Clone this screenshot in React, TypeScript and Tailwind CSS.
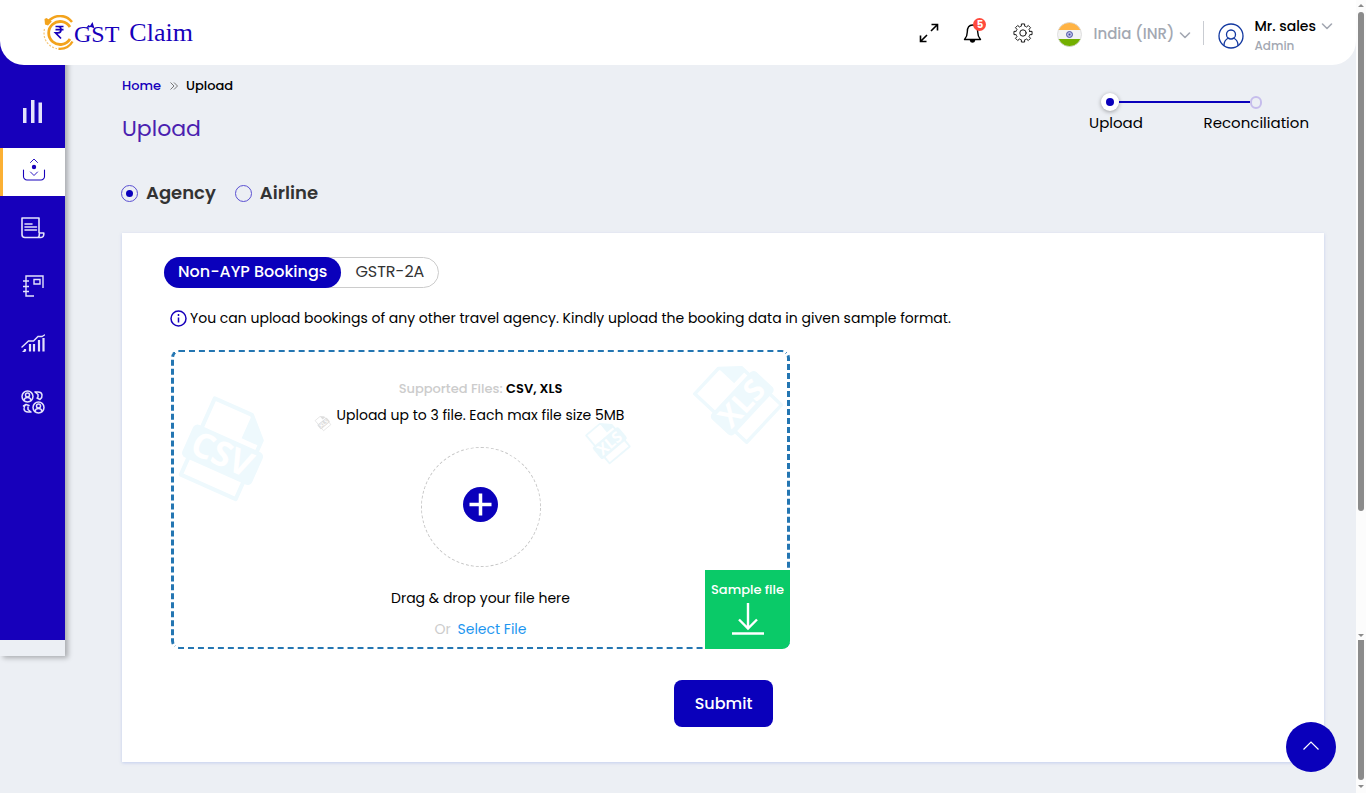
import type { ReactNode } from "react";

const STROKE = {
  fill: "none",
  stroke: "currentColor",
  strokeLinecap: "round" as const,
  strokeLinejoin: "round" as const,
};

function LogoMark() {
  return (
    <svg width="31" height="36" viewBox="0 0 31 36" fill="none" aria-hidden="true">
      <path d="M5 6.5C12-1 23-1 29 7" stroke="#f3a31c" strokeWidth="2.4" />
      <path d="M1.500 4 3.500 3 8.800 6.500 5 10.500 2 9.500z" fill="#f3a31c" />
      <path d="M27 12A11.5 11.5 0 1 0 27 24" stroke="#f3a31c" strokeWidth="2.8" />
      <path d="M15.5 33.8C21 34.2 26.500 31.800 29.500 26.500" stroke="#f3a31c" strokeWidth="2.4" />
      <path d="M1.500 14C-.5 23 4 31.500 14 33.600" stroke="#f6c677" strokeWidth="1.200" strokeDasharray="2 1.500" />
      <path
        d="M12.500 11.500h8M12.500 14.700h8M12.500 11.500h2.500c4 0 4 6.300 0 6.300h-2.500l5.500 5.700"
        stroke="#1700bb"
        strokeWidth="1.700"
      />
    </svg>
  );
}

function ExpandIcon() {
  return (
    <svg width="20" height="20" viewBox="0 0 20 20" {...STROKE} strokeWidth="1.6" strokeLinecap="butt" strokeLinejoin="miter">
      <path d="M12 8 18.500 1.500M12.500 1.500h6v6M8 12l-6.500 6.500M1.500 12.500v6h6" />
    </svg>
  );
}

function BellIcon() {
  return (
    <svg width="20" height="22" viewBox="0 0 20 22" {...STROKE} strokeWidth="1.4">
      <path d="M1.500 17.500h16c-2-2.200-2.800-3.500-2.800-7.500 0-4.500-2-7-5.200-7S4.300 5.500 4.300 10c0 4-.8 5.300-2.800 7.500z" />
      <path d="M7.500 18.500c.5 2 3.500 2 4 0z" fill="currentColor" />
    </svg>
  );
}

function GearIcon() {
  const teeth = Array.from({ length: 8 }, (_, i) => {
    const p = (deg: number, r: number) => {
      const a = ((deg + i * 45) * Math.PI) / 180;
      return `${(10 + r * Math.cos(a)).toFixed(2)} ${(10 + r * Math.sin(a)).toFixed(2)}`;
    };
    return `${i === 0 ? "M" : "L"}${p(-14, 7)} L${p(-10, 9.2)} L${p(10, 9.2)} L${p(14, 7)} A7 7 0 0 1 ${p(31, 7)}`;
  }).join(" ");
  return (
    <svg width="20" height="20" viewBox="0 0 20 20" {...STROKE} strokeWidth=".9">
      <path d={`${teeth} Z`} />
      <circle cx="10" cy="10" r="3.2" />
    </svg>
  );
}

function IndiaFlag() {
  return (
    <svg width="25" height="25" viewBox="0 0 25 25" aria-hidden="true">
      <clipPath id="flag-round">
        <circle cx="12.5" cy="12.5" r="12" />
      </clipPath>
      <g clipPath="url(#flag-round)">
        <path fill="#f3f3f3" d="M0 0h25v25H0z" />
        <path fill="#ffb344" d="M0 0h25v8H0z" />
        <path fill="#73af00" d="M0 17h25v8H0z" />
      </g>
      <circle cx="12.5" cy="12.5" r="12" fill="none" stroke="#d9d9d9" strokeWidth=".8" />
      <circle cx="12.5" cy="12.500" r="3" fill="#b9bce6" stroke="#41479b" strokeWidth=".9" />
      <circle cx="12.5" cy="12.500" r="1" fill="#41479b" />
    </svg>
  );
}

function ChevronDown() {
  return (
    <svg width="12" height="8" viewBox="0 0 12 8" {...STROKE} strokeWidth="1.6" aria-hidden="true">
      <path d="M1.500 2 6 6.500 10.500 2" />
    </svg>
  );
}

function AvatarIcon() {
  return (
    <svg width="26" height="26" viewBox="0 0 26 26" {...STROKE} strokeWidth="1.3" aria-hidden="true">
      <circle cx="13" cy="13" r="12" />
      <circle cx="13" cy="11.500" r="4.500" />
      <path d="M6 22.500c0-4 2-6.500 4.800-7.500M20 22.500c0-4-2-6.500-4.800-7.500" />
    </svg>
  );
}

function BarsIcon() {
  return (
    <svg width="24" height="24" viewBox="0 0 24 24" fill="currentColor">
      <path d="M2 8h3.500v15H2zM10 0h3.500v23H10zM17.500 2.500H21V23h-3.500z" />
    </svg>
  );
}

function UploadTrayIcon() {
  return (
    <svg width="24" height="24" viewBox="0 0 24 24" {...STROKE} strokeWidth="1.1">
      <path d="M1.500 12v6.500a3.500 3.500 0 0 0 3.500 3.500h14a3.500 3.500 0 0 0 3.500-3.500V12" />
      <path d="M8.500 4.500 12 1l3.500 3.500M8.500 14l3.500 3.500 3.500-3.500" strokeWidth=".9" />
      <circle cx="12" cy="9" r="2.200" fill="currentColor" stroke="none" />
    </svg>
  );
}

function ScrollDocIcon() {
  return (
    <svg width="24" height="22" viewBox="0 0 24 22" {...STROKE} strokeWidth="1.6">
      <path d="M18 15.500V1H1v16.500A3 3 0 0 0 4 20.500h16c2 0 3-1.500 2.800-4.500h-4.500c.2 3-.3 4.500-2 4.500" />
      <path d="M4 7h7M4 10h11.500M4 13h11.500" />
    </svg>
  );
}

function LedgerIcon() {
  return (
    <svg width="24" height="22" viewBox="0 0 24 22" {...STROKE} strokeWidth="1.4" strokeLinecap="butt" strokeLinejoin="miter">
      <path d="M13 21H5V1h17v12M2 6h6M2 11.500h6M2 16.500h6M13 4.500h6v4.500h-6z" />
    </svg>
  );
}

function GrowthIcon() {
  return (
    <svg width="24" height="20" viewBox="0 0 24 20" {...STROKE} strokeWidth="1.4" strokeLinejoin="miter">
      <path d="M1 13 7.500 7h5l4.500-4.500h4l2.500-1.500" />
      <path d="M4 15v2.500M9 10v7.500M13 10v7.500M18 6v11.500M22.500 4v13.500" strokeWidth="2.200" strokeLinecap="butt" />
      <path d="m1 18 3-3v3z" fill="currentColor" stroke="none" />
    </svg>
  );
}

function UsersSwapIcon() {
  return (
    <svg width="24" height="24" viewBox="0 0 24 24" {...STROKE} strokeWidth="1.5">
      <circle cx="6.500" cy="6.500" r="5.500" />
      <circle cx="6.500" cy="5" r="2" />
      <path d="M3 10.500c.5-4 6.500-4 7 0" />
      <circle cx="17.500" cy="17.500" r="5.500" />
      <circle cx="17.500" cy="16" r="2" />
      <path d="M14 21.500c.5-4 6.500-4 7 0" />
      <path d="M14 2h3c5 0 5 5 2 7.500M14 2l3 2.500V7M19 9.500l-3-1.500M10 22H7c-5 0-5-5-2-7.500M10 22l-3-2.500V17M2.500 16 5 14.500l3 1" />
    </svg>
  );
}

function FileMark({ label, size, turn, color }: { label: string; size: number; turn: number; color: string }) {
  return (
    <svg width={size} height={size} viewBox="-56 -56 112 112" fill="none" aria-hidden="true">
      <g transform={`rotate(${turn})`}>
        <path d="M-28-43h40L31-24v63h-59z" stroke={color} strokeWidth="4" strokeLinejoin="round" />
        <path d="M12-43 31-24v6H12z" fill={color} />
        <rect x="-36" y="-13" width="75" height="35" rx="5" fill={color} />
        <text
          x="1"
          y="16"
          textAnchor="middle"
          fill="#ffffff"
          fontFamily="Open Sans, sans-serif"
          fontWeight="700"
          fontSize="34"
        >
          {label}
        </text>
      </g>
    </svg>
  );
}

const NAV: { label: string; icon: ReactNode; active?: boolean }[] = [
  { label: "Dashboard", icon: <BarsIcon /> },
  { label: "Upload", icon: <UploadTrayIcon />, active: true },
  { label: "Invoices", icon: <ScrollDocIcon /> },
  { label: "Ledger", icon: <LedgerIcon /> },
  { label: "Reports", icon: <GrowthIcon /> },
  { label: "Users", icon: <UsersSwapIcon /> },
];

function Header() {
  return (
    <header className="relative z-10 flex h-[65px] items-center justify-between rounded-b-[24px] bg-white pr-[23px] pl-[43px]">
      <a href="#home" className="flex items-center font-['Liberation_Serif',serif] text-[#1700bb]">
        <LogoMark />
        <span className="relative pt-[2px] text-2xl">
          GST
          <svg className="absolute top-[6px] left-3" width="9" height="7" viewBox="0 0 9 7" fill="currentColor" aria-hidden="true">
            <path d="M0 6 2.500 3 4 4 6.500 0l2 6.500-3.500-1.500z" />
          </svg>
        </span>
        <span className="ml-[10px] text-[26px]">Claim</span>
      </a>
      <div className="flex items-center text-black">
        <button type="button" aria-label="Full screen" className="mr-6">
          <ExpandIcon />
        </button>
        <button type="button" aria-label="Notifications" className="relative mr-[30px]">
          <BellIcon />
          <span className="absolute -top-1 left-[10px] flex size-[13px] items-center justify-center rounded-full bg-[#ff4a3d] text-[10px] font-bold text-white">
            5
          </span>
        </button>
        <button type="button" aria-label="Settings" className="mr-6">
          <GearIcon />
        </button>
        <label className="mr-3 flex items-center pt-1 text-[#a3a8b2]">
          <IndiaFlag />
          <select aria-label="Country" className="ml-[11px] appearance-none bg-transparent text-[15px] font-medium outline-none">
            <option>India (INR)</option>
          </select>
          <span className="ml-[5px]">
            <ChevronDown />
          </span>
        </label>
        <span className="mr-[14px] h-6 w-px bg-[#c9ccd2]" />
        <button type="button" className="flex items-center gap-[10px] pt-[6px] text-left">
          <span className="text-[#1238a0]">
            <AvatarIcon />
          </span>
          <span>
            <span className="flex items-center gap-[5px] text-sm leading-5 font-medium">
              Mr. sales
              <span className="text-[#a3a8b2]">
                <ChevronDown />
              </span>
            </span>
            <span className="block text-xs leading-5 font-medium text-[#a3a8b2]">Admin</span>
          </span>
        </button>
      </div>
    </header>
  );
}

function Sidebar() {
  return (
    <aside className="-mt-[30px] w-[65px] shrink-0 self-start pb-4 shadow-[3px_2px_5px_rgba(0,0,0,0.28)]">
      <nav className="flex h-[605px] flex-col gap-[10px] bg-[#1700bb] pt-[55px] text-[#e4e2fb]">
        {NAV.map((item) => (
          <a
            key={item.label}
            href={`#${item.label.toLowerCase()}`}
            aria-label={item.label}
            className={
              item.active
                ? "flex h-12 items-center justify-center border-l-[3px] border-[#fbb034] bg-white pb-1 text-[#1700bb]"
                : "flex h-12 items-center justify-center pb-1"
            }
          >
            {item.icon}
          </a>
        ))}
      </nav>
    </aside>
  );
}

function Stepper() {
  return (
    <ol className="mt-7 mr-[15px] w-[220px] text-[15px] leading-5 text-black">
      <li className="flex items-center pr-[47px] pl-3" aria-hidden="true">
        <span className="flex size-[18px] items-center justify-center rounded-full bg-white shadow-[0_1px_4px_rgba(0,0,0,0.35)]">
          <span className="size-2 rounded-full bg-[#0a00bb]" />
        </span>
        <span className="h-[2px] flex-1 bg-[#0a00bb]" />
        <span className="h-[13px] w-3 rounded-full border-2 border-[#c6bdec]" />
      </li>
      <li className="mt-[2px] flex justify-between">
        <span>Upload</span>
        <span>Reconciliation</span>
      </li>
    </ol>
  );
}

function RadioOption({ label, checked }: { label: string; checked?: boolean }) {
  return (
    <label className="flex items-center gap-2 text-lg leading-6 font-semibold text-[#333333]">
      <input
        type="radio"
        name="source"
        defaultChecked={checked}
        className="flex size-[17px] appearance-none items-center justify-center rounded-full border border-[#5a4fd2] checked:before:size-[7px] checked:before:rounded-full checked:before:bg-[#0a00bb]"
      />
      {label}
    </label>
  );
}

function DropZone() {
  return (
    <div className="relative mt-[22px] ml-[7px] flex h-[299px] w-[619px] flex-col items-center rounded-lg border-x-[3px] border-y-2 border-dashed border-[#2476b2] pt-[27px] text-sm leading-5 text-black">
      <div className="absolute top-[41px] left-[-8px]">
        <FileMark label="CSV" size={114} turn={24} color="#eef9fd" />
      </div>
      <div className="absolute top-[14px] right-[0px] flex h-[84px] items-end overflow-hidden">
        <FileMark label="XLS" size={97} turn={-47} color="#eef9fd" />
      </div>
      <div className="absolute top-[65px] right-[154px]">
        <FileMark label="XLS" size={50} turn={-40} color="#ebf8fc" />
      </div>
      <div className="absolute top-[62px] left-[140px]">
        <FileMark label="XLS" size={18} turn={-40} color="#dddddd" />
      </div>

      <p className="text-[13px] font-medium text-[#cccccc]">
        Supported Files: <b className="font-semibold text-black">CSV, XLS</b>
      </p>
      <p className="mt-[6px]">Upload up to 3 file. Each max file size 5MB</p>
      <button
        type="button"
        aria-label="Add file"
        className="mt-[22px] flex size-[120px] items-center justify-center rounded-full border border-dashed border-[#c8c8c8] pb-[5px]"
      >
        <svg width="35" height="35" viewBox="0 0 35 35">
          <circle cx="17.500" cy="17.500" r="17.500" fill="#0a00bb" />
          <path d="M17.500 6.500v22M6.500 17.500h22" stroke="#ffffff" strokeWidth="3.500" />
        </svg>
      </button>
      <p className="mt-[21px]">Drag &amp; drop your file here</p>
      <p className="mt-[11px] text-[#cccccc]">
        Or{" "}
        <label className="ml-[3px] cursor-pointer text-[#1d96f0]">
          Select File
          <input type="file" className="sr-only" />
        </label>
      </p>
      <a
        href="#sample"
        className="absolute -right-[3px] -bottom-[2px] flex h-[79px] w-[85px] flex-col items-center rounded-br-lg bg-[#0aca68] pt-[10px] text-[13px] font-medium text-white"
      >
        Sample file
        <svg className="mt-[3px]" width="32" height="32" viewBox="0 0 32 32" fill="none" stroke="currentColor" strokeWidth="2.4">
          <path d="M16 0v25M7 16.500l9 9 9-9M0 30.500h32" />
        </svg>
      </a>
    </div>
  );
}

function Scrollbar() {
  return (
    <div className="flex w-[10px] shrink-0 flex-col items-center bg-[#fcfcfc] text-[#8b8b8b]" aria-hidden="true">
      <svg className="mt-1" width="6" height="3" viewBox="0 0 6 3" fill="currentColor">
        <path d="M3 0 6 3H0z" />
      </svg>
      <span className="mt-[5px] h-[499px] w-[6px] rounded-full bg-[#8b8b8b]" />
      <svg className="mt-[123px]" width="6" height="3" viewBox="0 0 6 3" fill="currentColor">
        <path d="M0 0h6L3 3z" />
      </svg>
      <span className="mt-[3px] h-[140px] w-[6px] rounded-b-full bg-[#8b8b8b]" />
      <svg className="mt-[5px]" width="6" height="3" viewBox="0 0 6 3" fill="currentColor">
        <path d="M0 0h6L3 3z" />
      </svg>
    </div>
  );
}

export default function App() {
  return (
    <div className="flex min-h-screen bg-[#eceff4] font-[Poppins,Inter,sans-serif]">
      <div className="min-w-0 flex-1">
        <Header />
        <div className="flex">
          <Sidebar />
          <main className="min-w-0 flex-1 pr-8 pl-[57px]">
            <div className="flex items-start justify-between">
              <div>
                <nav aria-label="Breadcrumb" className="mt-[11px] flex items-center text-[13px] leading-5 font-medium text-black">
                  <a href="#home" className="text-[#1700bb]">
                    Home
                  </a>
                  <svg className="mr-2 ml-[9px]" width="8" height="8" viewBox="0 0 8 8" fill="none" stroke="#777777">
                    <path d="M.5.5 4 4 .5 7.500M4 .5 7.500 4 4 7.500" />
                  </svg>
                  <span>Upload</span>
                </nav>
                <h1 className="mt-[17px] text-[22px] leading-8 text-[#4b1fb0]">Upload</h1>
              </div>
              <Stepper />
            </div>

            <div className="mt-9 -ml-px flex gap-[19px]">
              <RadioOption label="Agency" checked />
              <RadioOption label="Airline" />
            </div>

            <section className="mt-7 h-[529px] bg-white pt-6 pl-[42px] shadow-[0_1px_3px_rgba(120,150,230,0.35)]">
              <div role="tablist" className="flex w-fit rounded-full border border-[#cccccc] text-base leading-[28px]">
                <button
                  type="button"
                  role="tab"
                  aria-selected="true"
                  className="-m-px rounded-full bg-[#0a00bb] px-[14px] pt-px pb-[2px] font-medium text-white"
                >
                  Non-AYP Bookings
                </button>
                <button type="button" role="tab" aria-selected="false" className="pr-[14px] pb-px pl-[15px] text-[#333333]">
                  GSTR-2A
                </button>
              </div>

              <p className="mt-5 ml-[6px] flex items-center gap-[3px] text-sm leading-5 text-black">
                <svg width="17" height="17" viewBox="0 0 17 17" fill="none" stroke="#1700bb" strokeWidth="1.5">
                  <circle cx="8.500" cy="8.500" r="7.500" />
                  <path d="M8.500 7.500v5M8.500 4v2" />
                </svg>
                You can upload bookings of any other travel agency. Kindly upload the booking data in given sample format.
              </p>

              <DropZone />

              <button
                type="button"
                className="mt-[31px] ml-[510px] h-[47px] w-[99px] rounded-lg bg-[#0a00bb] text-base font-medium text-white"
              >
                Submit
              </button>
            </section>
          </main>
        </div>
      </div>
      <Scrollbar />
      <button
        type="button"
        aria-label="Back to top"
        className="fixed right-[30px] bottom-[21px] flex size-[50px] items-center justify-center rounded-full bg-[#0a00bb] text-white"
      >
        <svg className="mb-[3px]" width="16" height="9" viewBox="0 0 16 9" fill="none" stroke="currentColor" strokeWidth="1.2">
          <path d="M.5 8.500 8 1l7.500 7.500" />
        </svg>
      </button>
    </div>
  );
}
